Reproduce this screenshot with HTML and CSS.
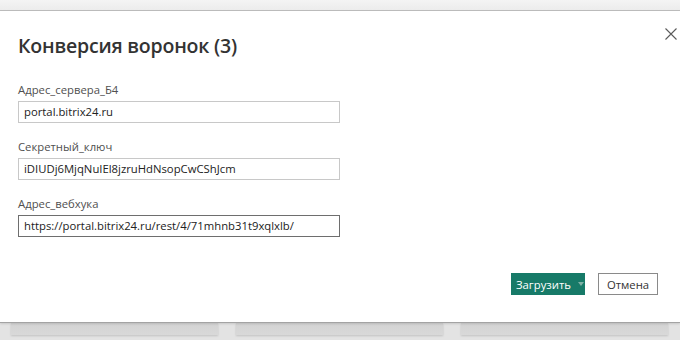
FILE: index.html
```html
<!DOCTYPE html>
<html lang="ru">
<head>
<meta charset="utf-8">
<link rel="stylesheet" href="styles.css">
</head>
<body>
<div class="topbar"></div>
<div class="dialog">
  <button class="close" aria-label="Закрыть">
    <svg width="12" height="12" viewBox="0 0 12 12"><path d="M0.5 0.5 L11.5 11.5 M11.5 0.5 L0.5 11.5" stroke="#5a5a5a" stroke-width="1.1" fill="none"/></svg>
  </button>
  <h1 class="title">Конверсия воронок (3)</h1>
  <div class="field">
    <div class="label">Адрес_сервера_Б4</div>
    <div class="input">portal.bitrix24.ru</div>
  </div>
  <div class="field">
    <div class="label">Секретный_ключ</div>
    <div class="input">iDIUDj6MjqNuIEl8jzruHdNsopCwCShJcm</div>
  </div>
  <div class="field">
    <div class="label">Адрес_вебхука</div>
    <div class="input focused">https://portal.bitrix24.ru/rest/4/71mhnb31t9xqlxlb/</div>
  </div>
  <div class="actions">
    <button class="btn primary">Загрузить<span class="caret"></span></button>
    <button class="btn secondary">Отмена</button>
  </div>
</div>
<div class="cards">
  <div class="card"></div>
  <div class="card"></div>
  <div class="card"></div>
</div>
</body>
</html>
```

FILE: styles.css
```css
* { box-sizing: border-box; }
html, body { margin: 0; padding: 0; }
body {
  width: 680px;
  height: 340px;
  overflow: hidden;
  background: #e3e3e3;
  font-family: "Open Sans", "Noto Sans", sans-serif;
  color: #333;
}
.topbar {
  height: 11px;
  background: linear-gradient(#f4f4f4, #ececec);
  border-bottom: 1px solid #bdbdbd;
}
.dialog {
  position: relative;
  height: 312px;
  background: #fff;
  padding: 0 18px;
  border-bottom: 1px solid #a3a3a3;
  box-shadow: 0 1px 2px rgba(0,0,0,0.12);
}
.close {
  position: absolute;
  top: 17px;
  right: 3px;
  width: 12px;
  height: 12px;
  padding: 0;
  border: 0;
  background: none;
  display: flex;
}
.title {
  margin: 0;
  padding-top: 21px;
  font-size: 19.5px;
  line-height: 28px;
  font-weight: 600;
  color: #333;
  letter-spacing: -0.2px;
}
.field {
  display: flex;
  flex-direction: column;
  width: 322px;
}
.field:first-of-type { margin-top: 22px; }
.field + .field { margin-top: 16px; }
.label {
  font-size: 11.3px;
  line-height: 16px;
  color: #505050;
  margin-bottom: 3px;
}
.input {
  height: 22px;
  border: 1px solid #c8c8c8;
  padding: 0 5px;
  font-size: 11.3px;
  line-height: 20px;
  color: #222;
  white-space: nowrap;
}
.input.focused { border-color: #6e6e6e; }
.actions {
  display: flex;
  justify-content: flex-end;
  gap: 13px;
  margin-top: 36px;
  margin-right: 4px;
}
.btn {
  height: 22px;
  font-family: inherit;
  font-size: 11.3px;
  padding: 0;
  display: flex;
  align-items: center;
}
.primary {
  width: 74px;
  background: #177a68;
  color: #fff;
  border: 0;
  padding-left: 5px;
}
.caret {
  margin-left: 7px;
  width: 0;
  height: 0;
  border-left: 3px solid transparent;
  border-right: 3px solid transparent;
  border-top: 4px solid #7fb1a6;
}
.secondary {
  width: 60px;
  background: #fff;
  color: #333;
  border: 1px solid #8a8a8a;
  justify-content: center;
}
.cards {
  display: flex;
  gap: 18px;
  padding-left: 11px;
}
.card {
  width: 207px;
  height: 12px;
  background: linear-gradient(#d3d3d3, #d9d9d9);
  box-shadow: 0 1px 2px rgba(0,0,0,0.15);
}
```
